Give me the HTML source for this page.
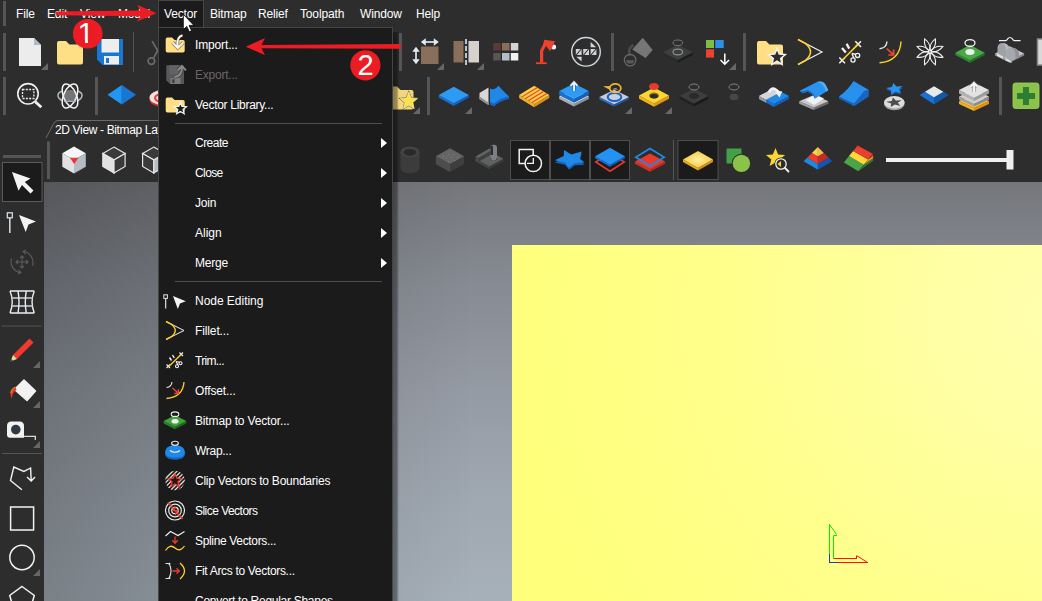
<!DOCTYPE html>
<html>
<head>
<meta charset="utf-8">
<title>Vector Import</title>
<style>
*{box-sizing:border-box;margin:0;padding:0}
html,body{width:1042px;height:601px;overflow:hidden;background:#2d2d2d;font-family:"Liberation Sans",sans-serif;font-size:12px;color:#fff}
#app{position:absolute;left:0;top:0;width:1042px;height:601px;overflow:hidden;background:#2d2d2d}
.abs{position:absolute}
.mb{position:absolute;top:0;height:28px;line-height:28px;font-size:12px;color:#fff;white-space:nowrap;letter-spacing:-0.15px}
.grip{position:absolute;background:#555}
#viewport{position:absolute;left:44px;top:182px;width:998px;height:419px;background:linear-gradient(to right,rgba(0,0,0,0.27) 0px,rgba(0,0,0,0) 430px),linear-gradient(to bottom,#75777c 0%,#878b93 25%,#959ba4 50%,#9fa7b0 75%,#a7b1ba 100%)}
#yellow{position:absolute;left:512px;top:245px;width:530px;height:356px;background:radial-gradient(circle 600px at 545px 72px,#ffffae 0%,#ffffa6 18%,#ffff98 36%,#ffff8c 55%,#ffff82 75%,#ffff7b 95%)}
#menu{position:absolute;left:158px;top:27px;width:235px;height:580px;background:#1b1b1b;border:1px solid #454545}
.mi{position:absolute;left:36px;height:30px;line-height:30px;font-size:12px;color:#fff;white-space:nowrap;letter-spacing:-0.2px}
.mi.dis{color:#6d6565}
.sep{position:absolute;left:16px;width:207px;height:1px;background:#4e4e4e}
.arr{position:absolute;left:221.500px;width:0;height:0;border-left:6px solid #fff;border-top:5px solid transparent;border-bottom:5px solid transparent}
svg{position:absolute;overflow:hidden}
.num{position:absolute;color:#fff;font-family:"Liberation Sans",sans-serif;font-size:29px;line-height:30px;width:30px;text-align:center}
#tab{position:absolute;left:55px;top:121px;height:18px;line-height:18px;font-size:12px;color:#fff;white-space:nowrap;letter-spacing:-0.350px}
</style>
</head>
<body>
<div id="app">
<div id="menubar">
<div class="grip" style="left:3px;top:1px;width:3px;height:25px"></div>
<div class="mb" style="left:16px">File</div>
<div class="mb" style="left:47px">Edit</div>
<div class="mb" style="left:80px">View</div>
<div class="mb" style="left:118px">Model</div>
<div class="abs" style="left:158px;top:0;width:46px;height:28px;background:#1b1b1b;border:1px solid #454545;border-bottom:none"></div>
<div class="mb" style="left:164px">Vector</div>
<div class="mb" style="left:210px">Bitmap</div>
<div class="mb" style="left:258px">Relief</div>
<div class="mb" style="left:300px">Toolpath</div>
<div class="mb" style="left:360px">Window</div>
<div class="mb" style="left:416px">Help</div>
</div>
<div id="viewport"></div>
<div id="yellow"></div>
<svg width="60" height="60" style="left:820px;top:515px" shape-rendering="crispEdges"><g fill="none" stroke-width="1"><path d="M9.500,39 V9.500 M9.500,9.500 L16.500,19.500 M17,20.500 H13.500 M13.500,20.500 V43.500" stroke="#00f000" shape-rendering="auto"/><path d="M9.500,9 V39" stroke="#00f000"/><path d="M13.500,20.500 V43.500" stroke="#00f000"/><path d="M9.500,39 V47.500 H18" stroke="#1e3cb4"/><path d="M18,47.500 H47.500 M13.500,43.500 H36.500 V40.500" stroke="#ff1010"/><path d="M36.500,40.500 L47.500,47.500" stroke="#ff1010" shape-rendering="auto"/></g></svg>
<svg width="1042" height="601" style="left:0;top:0">
<rect x="3" y="33" width="3" height="38" fill="#555"/>
<path d="M19,38 H34 L41,45 V66 H19 Z" fill="#ececec"/><path d="M34,38 L41,45 H34 Z" fill="#a9bccb"/>
<polygon points="48.0,63.0 48.0,70.0 41.0,70.0" fill="#666" />
<path d="M57,43 q0,-2 2,-2 h7 l3.5,3.5 h11.5 q2,0 2,2 v16 q0,2 -2,2 h-22 q-2,0 -2,-2 Z" fill="#ffdf85"/>
<path d="M97,39 H123 V65 H102.5 L97,59.5 Z" fill="#1976d2"/><rect x="101.5" y="39" width="17.5" height="13.5" fill="#eeeeee"/><rect x="104" y="56" width="15" height="8.5" fill="#eeeeee"/><rect x="106" y="58" width="3" height="5" fill="#1976d2"/>
<rect x="133" y="32" width="1" height="40" fill="#555"/>
<g stroke="#6a6a6a" stroke-width="1.7" fill="none"><circle cx="151.4" cy="61.1" r="3.3"/><path d="M153.3,58.3 L162,43 M152.1,41.1 L163,60"/></g>
<rect x="399" y="33" width="3" height="38" fill="#555"/>
<rect x="421" y="46.5" width="17.5" height="17.5" fill="#8a6e58"/>
<rect x="424" y="41" width="11.500" height="2" fill="#bccbd8"/><path d="M420.800,42 L425.800,38.300 V45.700 Z M438.800,42 L433.800,38.300 V45.700 Z" fill="#e4eaee"/>
<rect x="415" y="50" width="2" height="11" fill="#bccbd8"/><path d="M416,46.800 L412.300,51.800 H419.700 Z M416,64.200 L412.300,59.200 H419.700 Z" fill="#e4eaee"/>
<rect x="424" y="50" width="1" height="1" fill="#6f7f92"/>
<rect x="428" y="53" width="1" height="1" fill="#6f7f92"/>
<rect x="432" y="50" width="1" height="1" fill="#6f7f92"/>
<rect x="435" y="54" width="1" height="1" fill="#6f7f92"/>
<rect x="425" y="57" width="1" height="1" fill="#6f7f92"/>
<rect x="430" y="59" width="1" height="1" fill="#6f7f92"/>
<rect x="434" y="60" width="1" height="1" fill="#6f7f92"/>
<rect x="427" y="61.5" width="1" height="1" fill="#6f7f92"/>
<polygon points="444.0,63.0 444.0,70.0 437.0,70.0" fill="#666" />
<rect x="453.5" y="41" width="10" height="21.5" fill="#8a6e58"/><rect x="468.5" y="41" width="10.5" height="21.5" fill="#d3d0d6"/>
<path d="M466,39 V65" stroke="#b8c4cc" stroke-width="2" stroke-dasharray="5,2" fill="none"/>
<rect x="474" y="44" width="1.200" height="1.200" fill="#fbd84a"/>
<rect x="473" y="47" width="1.200" height="1.200" fill="#fbd84a"/>
<rect x="476" y="48.5" width="1.200" height="1.200" fill="#fbd84a"/>
<rect x="472.5" y="52" width="1.200" height="1.200" fill="#fbd84a"/>
<rect x="476" y="54" width="1.200" height="1.200" fill="#fbd84a"/>
<rect x="473.5" y="56.5" width="1.200" height="1.200" fill="#fbd84a"/>
<rect x="472" y="59.5" width="1.200" height="1.200" fill="#fbd84a"/>
<rect x="475" y="60.5" width="1.200" height="1.200" fill="#fbd84a"/>
<rect x="456" y="47" width="1" height="1" fill="#6f7f92"/>
<rect x="459" y="45" width="1" height="1" fill="#6f7f92"/>
<rect x="459" y="49" width="1" height="1" fill="#6f7f92"/>
<rect x="457" y="52" width="1" height="1" fill="#6f7f92"/>
<rect x="460" y="55" width="1" height="1" fill="#6f7f92"/>
<rect x="457" y="58" width="1" height="1" fill="#6f7f92"/>
<rect x="459.5" y="60" width="1" height="1" fill="#6f7f92"/>
<polygon points="484.0,63.0 484.0,70.0 477.0,70.0" fill="#666" />
<rect x="493.2" y="43" width="7.5" height="7.5" fill="#5a3b37"/>
<rect x="502" y="43" width="7.5" height="7.5" fill="#8a6e58"/>
<rect x="510.8" y="43" width="7.5" height="7.5" fill="#d6d2d6"/>
<rect x="493.2" y="53" width="7.5" height="7.5" fill="#565656"/>
<rect x="502" y="53" width="7.5" height="7.5" fill="#b4bec8"/>
<rect x="510.8" y="53" width="7.5" height="7.5" fill="#f1f1f1"/>
<circle cx="553.6" cy="47" r="2.5" fill="#f4f4f4"/><g fill="#f0412f"><rect x="536" y="62.3" width="10.8" height="1.8"/><path d="M540,62.5 V50.5 L544.2,42.5 L547,44 L543.2,51.2 V62.5 Z"/><path d="M544.2,39.8 L555,41.3 L550.2,51.3 L546.3,46.2 L543,45.5 Z"/></g>
<circle cx="586" cy="51.8" r="14.3" fill="none" stroke="#cfd8dc" stroke-width="1.4"/>
<rect x="575.8" y="49" width="5.8" height="6" fill="#d2d2d8"/>
<path d="M576.2,55 L581.2,49" stroke="#2d2d2d" stroke-width="1.1"/>
<rect x="583.2" y="49" width="5.8" height="6" fill="#d2d2d8"/>
<path d="M583.6,55 L588.6,49" stroke="#2d2d2d" stroke-width="1.1"/>
<rect x="590.6" y="49" width="5.8" height="6" fill="#d2d2d8"/>
<path d="M591,55 L596,49" stroke="#2d2d2d" stroke-width="1.1"/>
<polygon points="590.6,42.0 596.2,47.2 590.6,47.2" fill="#d2d2d8" />
<polygon points="576.3,56.7 581.6,56.7 581.6,61.5" fill="#d2d2d8" />
<rect x="611" y="33" width="3" height="38" fill="#555"/>
<g><polygon points="642.700,37.700 652.700,50 645.600,58.100 632.300,49.500" fill="#747678"/><path d="M633.400,45.300 Q627.500,47.500 629.700,56" stroke="#4c4c4c" stroke-width="2.600" fill="none"/><circle cx="630.100" cy="60.100" r="5.800" fill="none" stroke="#686868" stroke-width="1.200"/><path d="M625.800,60.300 H634.400 L632.800,63.500 H627.400 Z" fill="#5a5a5a"/></g>
<polygon points="663.0,52.3 677.9,59.9 677.9,62.6 663.0,55.0" fill="#2a2a2a" /><polygon points="677.9,59.9 692.8,52.3 692.8,55.0 677.9,62.6" fill="#1c1c1c" /><polygon points="677.9,44.7 692.8,52.3 677.9,59.9 663.0,52.3" fill="#3d3f3f" />
<ellipse cx="677.800" cy="52" rx="4.800" ry="2.800" fill="none" stroke="#8a8a8a" stroke-width="1.200"/><ellipse cx="677.800" cy="42.800" rx="4.800" ry="2.800" fill="none" stroke="#787878" stroke-width="1"/>
<rect x="706" y="40" width="8" height="8" fill="#7cc043"/><rect x="715.3" y="40" width="8.4" height="8" fill="#2d8fe8"/><rect x="706" y="49.3" width="8" height="8.3" fill="#e8432e"/>
<path d="M724.8,53.5 V64 M720.5,60 L724.8,64.3 L729,60" stroke="#fff" stroke-width="1.5" fill="none"/>
<polygon points="736.0,63.0 736.0,70.0 729.0,70.0" fill="#666" />
<rect x="743" y="33" width="3" height="38" fill="#555"/>
<path d="M757,43 q0,-2 2,-2 h7 l3.5,3.5 h11.5 q2,0 2,2 v16 q0,2 -2,2 h-22 q-2,0 -2,-2 Z" fill="#ffdf85"/>
<polygon points="777.0,48.6 779.3,54.1 785.3,54.6 780.7,58.5 782.1,64.3 777.0,61.2 771.9,64.3 773.3,58.5 768.7,54.6 774.7,54.1" fill="#2d2d2d" stroke="#f2f2f2" stroke-width="1.5" stroke-linejoin="miter"/>
<path d="M798,39.5 L822,52 L798,64.5" fill="none" stroke="#f2f2f2" stroke-width="1.2"/><path d="M798,39.5 L805,43.2 Q816,52 805,60.8 L798,64.5" fill="none" stroke="#fdd02c" stroke-width="1.6"/>
<g fill="none" stroke="#f2f2f2" stroke-width="1.600"><path d="M839.300,57.500 L845,63.200 M839.300,63.200 L845,57.500"/><path d="M855.300,41.300 L861,47 M855.300,47 L861,41.300"/><path d="M842,48 L845.800,52.600 M846.600,43.800 L849.200,48.600" stroke-width="2.300"/><circle cx="853" cy="60" r="2.100" stroke-width="1.300"/><circle cx="857.600" cy="55.400" r="2.100" stroke-width="1.300"/><path d="M851.800,53.400 L853.800,58 M851.800,53.400 L856,54.500" stroke-width="1.300"/></g><path d="M842.200,60.300 L858.200,44.100" stroke="#fdd02c" stroke-width="1.600"/>
<path d="M879.500,62.800 Q900,61 901,41.500" fill="none" stroke="#fdd02c" stroke-width="1.400"/><path d="M879.500,48.800 Q886.500,48 887,41.500" fill="none" stroke="#e8e8e8" stroke-width="1.400"/><path d="M886.800,48.600 L893,54.300 M888.300,55 H893.600 V49.500" fill="none" stroke="#f0452f" stroke-width="1.700"/>
<g transform="translate(930,51.8)" fill="none" stroke="#f2f2f2" stroke-width="1.1"><path d="M0,0 Q7,-4.300 14,0 Q7,4.300 0,0 Z" transform="rotate(22.5)"/><path d="M0,0 Q7,-4.300 14,0 Q7,4.300 0,0 Z" transform="rotate(67.5)"/><path d="M0,0 Q7,-4.300 14,0 Q7,4.300 0,0 Z" transform="rotate(112.5)"/><path d="M0,0 Q7,-4.300 14,0 Q7,4.300 0,0 Z" transform="rotate(157.5)"/><path d="M0,0 Q7,-4.300 14,0 Q7,4.300 0,0 Z" transform="rotate(202.5)"/><path d="M0,0 Q7,-4.300 14,0 Q7,4.300 0,0 Z" transform="rotate(247.5)"/><path d="M0,0 Q7,-4.300 14,0 Q7,4.300 0,0 Z" transform="rotate(292.5)"/><path d="M0,0 Q7,-4.300 14,0 Q7,4.300 0,0 Z" transform="rotate(337.5)"/></g><circle cx="930" cy="51.8" r="1.6" fill="#f2f2f2"/><circle cx="930" cy="51.8" r="0.7" fill="#2d2d2d"/>
<polygon points="955.3,52.7 970.0,60.3 970.0,62.7 955.3,55.1" fill="#2f8a33" /><polygon points="970.0,60.3 984.7,52.7 984.7,55.1 970.0,62.7" fill="#227227" /><polygon points="970.0,45.1 984.7,52.7 970.0,60.3 955.3,52.7" fill="#48aa46" />
<ellipse cx="970" cy="52" rx="4.6" ry="3" fill="#eee"/><ellipse cx="970" cy="43" rx="5" ry="3.4" fill="none" stroke="#f2f2f2" stroke-width="1.3"/>
<polygon points="995.0,53.5 1009.6,60.7 1009.6,62.7 995.0,55.5" fill="#9a9c9e" /><polygon points="1009.6,60.7 1024.2,53.5 1024.2,55.5 1009.6,62.7" fill="#85878a" /><polygon points="1009.6,46.3 1024.2,53.5 1009.6,60.7 995.0,53.5" fill="#c4c6c8" />
<path d="M997.5,53 V47.5 Q998,43 1002.5,43 L1008,45.5 Q1009.5,47 1009.5,50 V55 L1004,57.5 Z" fill="#9fa3a7"/><path d="M1002.5,43 Q1006.5,42.8 1008.5,46 L1009.5,50 V54 L1006,55.5 V50 Q1005.5,45 1002.5,43 Z" fill="#b4b8bc"/>
<path d="M1006,58.5 V52.5 Q1006.5,47.5 1011.5,47.5 L1017.5,50 Q1019,51.5 1019,54.5 V57 L1012,61 Z" fill="#a6aaae"/><path d="M1011.5,47.5 Q1016,47.5 1018,50.5 L1019,54.500 V57 L1015.5,59 V54.5 Q1015,49.5 1011.5,47.5 Z" fill="#8e9296"/>
<polygon points="997.0,53.5 1003.0,56.5 1003.0,58.7 997.0,55.7" fill="#e4e4e4" />
<polygon points="1005.5,58.3 1011.5,61.3 1011.5,63.0 1005.5,60.2" fill="#e4e4e4" />
<path d="M999,40.600 H1005.500 Q1006.800,40.600 1007.500,39 Q1010,36 1012.500,39 Q1013.200,40.600 1014.500,40.600 H1020.600" fill="none" stroke="#f2f2f2" stroke-width="1.200"/>
<rect x="1037.5" y="39" width="6" height="26" fill="#d9d9d9" stroke="#8a8a8a" stroke-width="1.5"/>
<rect x="3" y="77" width="3" height="38" fill="#555"/>
<circle cx="28" cy="93.800" r="10.200" fill="none" stroke="#eef1f3" stroke-width="1.600"/><path d="M35.300,101.800 L41.300,107.300" stroke="#f0f0f0" stroke-width="2.800" stroke-linecap="butt"/><rect x="22.500" y="89.500" width="11.400" height="9" fill="none" stroke="#f0f0f0" stroke-width="1.300" stroke-dasharray="2,1.300"/>
<path d="M62.500,91 Q57.500,92.500 58,96 Q58.500,99 62,100.500 M77.500,91 Q82.500,92.500 82,96 Q81.500,99 78,100.500" fill="none" stroke="#a9bccb" stroke-width="1.500"/><ellipse cx="70" cy="95.600" rx="6.400" ry="5.800" fill="#747577"/><g fill="none" stroke="#f2f2f2" stroke-width="1.500"><ellipse cx="70" cy="96" rx="6.400" ry="12.800" transform="rotate(-24 70 96)"/><ellipse cx="70" cy="96" rx="6.400" ry="12.800" transform="rotate(24 70 96)"/></g><path d="M64,101.300 H76" stroke="#a9bccb" stroke-width="1.200"/>
<rect x="95" y="77" width="3" height="38" fill="#555"/>
<polygon points="107.5,94.7 121.8,85.0 121.8,104.5" fill="#2196f3" />
<polygon points="136.0,94.7 121.8,85.0 121.8,104.5" fill="#1976d2" />
<ellipse cx="163" cy="99.500" rx="13.500" ry="7.500" fill="#d32f2f"/><ellipse cx="163" cy="97.500" rx="13.500" ry="7.500" fill="#f3dede"/><ellipse cx="164" cy="98" rx="9" ry="4.500" fill="none" stroke="#e53935" stroke-width="2"/>
<path d="M388,88.5 q0,-2 2,-2 h7 l3.5,3.5 h11 q2,0 2,2 v15.5 q0,2 -2,2 h-21.5 q-2,0 -2,-2 Z" fill="#f3d67e"/>
<polygon points="408.8,90.6 411.7,97.2 418.9,97.9 413.5,102.7 415.0,109.8 408.8,106.1 402.6,109.8 404.1,102.7 398.7,97.9 405.9,97.2" fill="#3a3320" />
<polygon points="408.8,92.0 411.2,97.9 417.5,98.4 412.7,102.5 414.2,108.6 408.8,105.3 403.4,108.6 404.9,102.5 400.1,98.4 406.4,97.9" fill="#fbe24a" stroke="#fff6b0" stroke-width="0.700"/>
<polygon points="420.0,107.0 420.0,114.0 413.0,114.0" fill="#666" />
<rect x="427" y="77" width="3" height="38" fill="#555"/>
<polygon points="438.8,95.0 453.8,103.3 453.8,105.9 438.8,97.6" fill="#1a6fd0" /><polygon points="453.8,103.3 468.8,95.0 468.8,97.6 453.8,105.9" fill="#1660bd" /><polygon points="453.8,86.7 468.8,95.0 453.8,103.3 438.8,95.0" fill="#2d9af3" />
<polygon points="472.0,107.0 472.0,114.0 465.0,114.0" fill="#666" />
<polygon points="479.5,93.0 488.5,87.5 488.5,105.0 479.5,99.0" fill="#d8d8d8" />
<polygon points="479.5,99.0 488.5,105.0 488.5,102.5 479.5,96.5" fill="#8f8f8f" />
<path d="M490,88.500 L493,89.600 Q496.500,88.500 498.500,85.700 Q503.500,91.500 509,96.600 V98.800 Q500,100.500 494,106.300 L490,104.200 Z" fill="#2089e8"/><path d="M509,96.600 V98.800 Q500,100.500 494,106.300 V103.800 Q500,98.200 509,96.600 Z" fill="#1560c0"/><path d="M490,101.800 L494,103.800 V106.300 L490,104.200 Z" fill="#1560c0"/>
<polygon points="519.1,94.9 534.2,104.1 534.2,107.3 519.1,98.1" fill="#f2ae2a" /><polygon points="534.2,104.1 549.3,94.9 549.3,98.1 534.2,107.3" fill="#e08f1c" /><polygon points="534.2,85.7 549.3,94.9 534.2,104.1 519.1,94.9" fill="#f8cf45" />
<polygon points="521.5,96.4 536.6,87.2 537.7,87.9 522.6,97.1" fill="#e8452c" />
<polygon points="524.8,98.3 539.9,89.2 541.0,89.8 525.9,99.0" fill="#e8452c" />
<polygon points="528.0,100.3 543.1,91.1 544.2,91.8 529.1,101.0" fill="#e8452c" />
<polygon points="531.3,102.3 546.4,93.1 547.5,93.8 532.4,103.0" fill="#e8452c" />
<polygon points="559.2,96.3 574.0,103.8 574.0,106.6 559.2,99.1" fill="#a8acb0" /><polygon points="574.0,103.8 588.8,96.3 588.8,99.1 574.0,106.6" fill="#8e9296" /><polygon points="574.0,88.8 588.8,96.3 574.0,103.8 559.2,96.3" fill="#e8e8e8" />
<polygon points="559.2,91.0 574.0,98.5 574.0,102.8 559.2,95.3" fill="#1a6fd0" /><polygon points="574.0,98.5 588.8,91.0 588.8,95.3 574.0,102.8" fill="#1660bd" /><polygon points="574.0,83.5 588.8,91.0 574.0,98.5 559.2,91.0" fill="#2d9af3" />
<path d="M574,82.500 V91 M570.500,85.800 L574,82.200 L577.500,85.800" stroke="#1a4f94" stroke-width="3.400" fill="none" opacity="0.600"/><path d="M574,82.500 V91 M570.500,85.800 L574,82.200 L577.500,85.800" stroke="#f2f2f2" stroke-width="1.900" fill="none"/>
<polygon points="599.4,97.0 614.2,104.3 614.2,106.6 599.4,99.3" fill="#2a6fd0" /><polygon points="614.2,104.3 629.0,97.0 629.0,99.3 614.2,106.6" fill="#1a56b0" /><polygon points="614.2,89.7 629.0,97.0 614.2,104.3 599.4,97.0" fill="#c8ccd4" />
<ellipse cx="614.500" cy="97" rx="6.800" ry="4.100" fill="#c6d2e2" stroke="#1e62c8" stroke-width="2"/>
<ellipse cx="615.300" cy="88.200" rx="5.600" ry="4.300" fill="none" stroke="#f0b62c" stroke-width="1.700"/><path d="M603,86.200 L610.500,86 L609.800,89.800 Z" fill="#f0b62c"/><path d="M612.500,89.500 q2.500,-2.500 5.500,0 Z" fill="#b8bcc4"/>
<polygon points="632.0,107.0 632.0,114.0 625.0,114.0" fill="#666" />
<polygon points="639.0,95.5 654.0,103.5 654.0,106.8 639.0,98.8" fill="#f2b020" /><polygon points="654.0,103.5 669.0,95.5 669.0,98.8 654.0,106.8" fill="#e3951a" /><polygon points="654.0,87.5 669.0,95.5 654.0,103.5 639.0,95.5" fill="#fbd734" />
<ellipse cx="654" cy="95.5" rx="5" ry="3" fill="#9a6a18"/><ellipse cx="654" cy="96.3" rx="4" ry="2.2" fill="#2d2d2d"/>
<ellipse cx="654" cy="86.5" rx="5" ry="3.6" fill="#e8392b"/>
<polygon points="672.0,107.0 672.0,114.0 665.0,114.0" fill="#666" />
<polygon points="679.7,96.0 694.0,103.6 694.0,106.6 679.7,99.0" fill="#222" /><polygon points="694.0,103.6 708.3,96.0 708.3,99.0 694.0,106.6" fill="#1a1a1a" /><polygon points="694.0,88.4 708.3,96.0 694.0,103.6 679.7,96.0" fill="#3d3d3d" />
<ellipse cx="694" cy="96" rx="5" ry="3" fill="#2a2a2a"/><ellipse cx="694" cy="87" rx="5" ry="3" fill="none" stroke="#808080" stroke-width="1"/>
<ellipse cx="734" cy="87" rx="5" ry="3" fill="none" stroke="#808080" stroke-width="1"/><ellipse cx="734" cy="97" rx="4.5" ry="3.3" fill="#474747"/>
<polygon points="759.0,96.0 774.0,104.0 774.0,107.0 759.0,99.0" fill="#1a6fd0" /><polygon points="774.0,104.0 789.0,96.0 789.0,99.0 774.0,107.0" fill="#1660bd" /><polygon points="774.0,88.0 789.0,96.0 774.0,104.0 759.0,96.0" fill="#2089e8" />
<polygon points="759.0,96.0 774.0,88.0 781.0,91.7 766.0,99.7" fill="#d5d5d5" />
<polygon points="759.0,96.0 766.0,99.7 766.0,102.7 759.0,99.0" fill="#9a9a9a" />
<path d="M768.800,92.300 Q772.500,84.500 778.800,92.500" fill="none" stroke="#f2f2f2" stroke-width="2.400"/><path d="M775,92 L782.300,91.300 L779.600,97.600 Z" fill="#f2f2f2"/>
<polygon points="799.2,101.3 813.8,107.5 813.8,109.9 799.2,103.7" fill="#9a9c9e" /><polygon points="813.8,107.5 828.4,101.3 828.4,103.7 813.8,109.9" fill="#6e7072" /><polygon points="813.8,95.1 828.4,101.3 813.8,107.5 799.2,101.3" fill="#c6c8ca" />
<polygon points="805.5,100.0 815.5,94.5 824.0,98.5 814.0,105.0" fill="#f2f2f2" />
<path d="M799.800,90.800 L817.500,81.800 Q823.500,80.300 826,85.500 L828.300,90.300 L815,98.700 Q812.500,93 807.700,91.800 L802.500,93.300 Z" fill="#2a93f0"/><path d="M799.800,90.800 L802.500,93.300 L807.700,91.800 Q812.500,93 815,98.700 L815,96.500 Q812.500,91.500 807.700,90 L802,91.500 Z" fill="#1769c8"/><path d="M817.500,81.800 Q823.500,80.300 826,85.500 L828.300,90.300 L826,91.700 Q824,84 817.500,81.800 Z" fill="#55acf5"/>
<path d="M839,96.600 Q848,90 853.600,81 L868.400,89.700 L868.400,96.600 L854,105.900 Z" fill="#2a90ee"/><path d="M839,96.600 L854,103.600 V105.900 L839,98.600 Z" fill="#1565c0"/><path d="M854,103.600 Q859,98 861.500,94 Q864,90.300 868.400,89.700 V96.600 L854,105.900 Z" fill="#1765c4"/>
<ellipse cx="894.300" cy="104" rx="10.300" ry="6.200" fill="#a2a2a2"/><ellipse cx="894.300" cy="102.300" rx="10.300" ry="6.200" fill="#dcdcdc"/>
<polygon points="892.9,97.6 895.8,100.6 901.6,100.2 897.8,102.8 900.3,106.0 894.9,104.6 890.7,107.0 891.2,103.5 886.1,101.8 891.8,101.0" fill="#4c4c4c" />
<polygon points="893.2,84.7 896.5,88.2 902.7,87.7 898.7,90.7 901.3,94.4 895.5,92.9 890.9,95.6 891.4,91.6 885.9,89.6 892.0,88.7" fill="#1769c8" />
<polygon points="893.2,83.1 896.5,86.6 902.7,86.1 898.7,89.1 901.3,92.8 895.5,91.3 890.9,94.0 891.4,90.0 885.9,88.0 892.0,87.1" fill="#2a93f0" />
<polygon points="920.0,95.0 934.0,86.8 948.3,95.0 934.0,104.2" fill="#1565c0" />
<polygon points="920.0,95.0 925.0,91.8 934.0,97.3 934.0,104.2" fill="#1a6fd0" />
<polygon points="948.3,95.0 943.3,91.8 934.0,97.3 934.0,104.2" fill="#1258a8" />
<polygon points="925.0,91.8 934.0,86.3 943.3,91.8 934.0,97.3" fill="#e8e8e8" />
<polygon points="959.0,101.0 974.0,108.0 974.0,111.0 959.0,104.0" fill="#f2ae25" /><polygon points="974.0,108.0 989.0,101.0 989.0,104.0 974.0,111.0" fill="#e3901a" /><polygon points="974.0,94.0 989.0,101.0 974.0,108.0 959.0,101.0" fill="#f6c33c" />
<polygon points="959.0,96.5 974.0,103.5 974.0,106.5 959.0,99.5" fill="#a2a2a2" /><polygon points="974.0,103.5 989.0,96.5 989.0,99.5 974.0,106.5" fill="#8c8c8c" /><polygon points="974.0,89.5 989.0,96.5 974.0,103.5 959.0,96.5" fill="#cfcfcf" />
<polygon points="959.0,90.0 974.0,97.5 974.0,101.0 959.0,93.5" fill="#b2b2b2" /><polygon points="974.0,97.5 989.0,90.0 989.0,93.5 974.0,101.0" fill="#9c9c9c" /><polygon points="974.0,82.5 989.0,90.0 974.0,97.5 959.0,90.0" fill="#e2e2e2" />
<path d="M974,83.500 V92 M970.300,87 L974,83 L977.700,87" stroke="#7a8086" stroke-width="3.400" fill="none" opacity="0.700"/><path d="M974,83.500 V92 M970.300,87 L974,83 L977.700,87" stroke="#f4f6f8" stroke-width="1.900" fill="none"/>
<rect x="999" y="77" width="3" height="38" fill="#555"/>
<rect x="1013" y="83" width="26" height="25.5" rx="2.5" fill="#8bc34a" stroke="#9ed45e" stroke-width="0.8"/><path d="M1023,87 h6 v6 h6 v6 h-6 v6 h-6 v-6 h-6 v-6 h6 Z" fill="#2e7d32"/>
<path d="M46,138 L54,123 Q55.5,120.5 58,120.5 H170" fill="none" stroke="#6a6a6a" stroke-width="1"/>
<rect x="47" y="141.5" width="3" height="37.5" fill="#555"/>
<polygon points="74.0,146.5 85.8,153.2 74.0,159.9 62.3,153.2" fill="#f6f6f6" /><polygon points="62.3,153.2 74.0,159.9 74.0,173.5 62.3,166.8" fill="#e2e2e2" /><polygon points="74.0,159.9 85.8,153.2 85.8,166.8 74.0,173.5" fill="#b4bcc4" /><polygon points="69.8,157.7 78.5,157.7 74.2,164.0" fill="#e53935" />
<polygon points="114.0,147.1 125.1,153.5 114.0,159.9 102.8,153.5" fill="#3a3a3a" stroke="#e6e6e6" stroke-width="1.2"/><polygon points="102.8,153.5 114.0,159.9 114.0,172.9 102.8,166.5" fill="#e2e2e2" stroke="#e6e6e6" stroke-width="1.2"/><polygon points="114.0,159.9 125.1,153.5 125.1,166.5 114.0,172.9" fill="#3a3a3a" stroke="#e6e6e6" stroke-width="1.2"/>
<polygon points="153.8,147.1 164.9,153.5 153.8,159.9 142.6,153.5" fill="#3a3a3a" stroke="#e6e6e6" stroke-width="1.2"/><polygon points="142.6,153.5 153.8,159.9 153.8,172.9 142.6,166.5" fill="#3a3a3a" stroke="#e6e6e6" stroke-width="1.2"/><polygon points="153.8,159.9 164.9,153.5 164.9,166.5 153.8,172.9" fill="#b4bcc4" stroke="#e6e6e6" stroke-width="1.2"/>
<path d="M400.500,152 v16 a9.500,5.500 0 0 0 19,0 v-16 Z" fill="#3c3c3c"/><ellipse cx="410" cy="152" rx="9.500" ry="5.500" fill="#444"/><ellipse cx="410" cy="152.300" rx="6.200" ry="3.400" fill="#2a2a2a"/>
<polygon points="435.9,156.2 450.0,164.1 450.0,172.1 435.9,164.2" fill="#4c4e4e" /><polygon points="450.0,164.1 464.1,156.2 464.1,164.2 450.0,172.1" fill="#3d3f3f" /><polygon points="450.0,148.3 464.1,156.2 450.0,164.1 435.9,156.2" fill="#636567" />
<rect x="443" y="156" width="1" height="1" fill="#b07a3a"/>
<rect x="448" y="154" width="1" height="1" fill="#b07a3a"/>
<rect x="453" y="154" width="1" height="1" fill="#b07a3a"/>
<rect x="446" y="158" width="1" height="1" fill="#b07a3a"/>
<rect x="451" y="157" width="1" height="1" fill="#b07a3a"/>
<rect x="457" y="157" width="1" height="1" fill="#b07a3a"/>
<rect x="448" y="161" width="1" height="1" fill="#b07a3a"/>
<rect x="454" y="160" width="1" height="1" fill="#b07a3a"/>
<polygon points="475.6,158.8 489.5,166.6 489.5,169.2 475.6,161.4" fill="#444646" /><polygon points="489.5,166.6 503.4,158.8 503.4,161.4 489.5,169.2" fill="#383a3a" /><polygon points="489.5,151.0 503.4,158.8 489.5,166.6 475.6,158.8" fill="#5e6062" />
<polygon points="475.6,156.4 489.5,148.4 492.0,149.9 478.2,157.9" fill="#626466" />
<polygon points="478.2,157.9 492.0,149.9 492.0,154.0 478.2,162.0" fill="#3e4040" />
<polygon points="475.6,156.4 478.2,157.9 478.2,162.0 475.6,160.5" fill="#4a4c4c" />
<rect x="490.600" y="144.800" width="6.400" height="17" rx="3" fill="#7c8084"/><rect x="490.600" y="146" width="2.400" height="9" fill="#2d2d2d"/><path d="M490.600,158 a3.200,3.200 0 0 0 6.400,0" fill="none" stroke="#4a4c4c" stroke-width="1"/>
<rect x="510.5" y="140.500" width="39" height="39" fill="#1b1b1b" stroke="#4e4e4e" stroke-width="1"/>
<rect x="550.5" y="140.500" width="39" height="39" fill="#1b1b1b" stroke="#4e4e4e" stroke-width="1"/>
<rect x="590.5" y="140.500" width="39" height="39" fill="#1b1b1b" stroke="#4e4e4e" stroke-width="1"/>
<rect x="678" y="140.500" width="40" height="39" fill="#1b1b1b" stroke="#4e4e4e" stroke-width="1"/>
<rect x="519.2" y="149.5" width="14" height="14" fill="none" stroke="#f2f2f2" stroke-width="1.5"/><circle cx="533.3" cy="163.4" r="8.2" fill="#1b1b1b" stroke="#f2f2f2" stroke-width="1.5"/><path d="M533.3,158 V163.4 H527" fill="none" stroke="#f2f2f2" stroke-width="1.3"/>
<polygon points="564.0,152.3 571.3,156.6 581.7,153.7 579.7,160.6 584.6,164.7 574.8,165.2 569.0,169.8 565.0,164.7 554.8,162.4 563.8,158.3" fill="#1565c0" />
<polygon points="564.0,150.1 571.3,154.4 581.7,151.5 579.7,158.4 584.6,162.5 574.8,163.0 569.0,167.6 565.0,162.5 554.8,160.2 563.8,156.1" fill="#2089e8" />
<polygon points="595.8,162.0 610.0,153.0 624.3,162.0 610.0,171.2" fill="none" stroke="#e8392b" stroke-width="1.600"/>
<polygon points="595.1,156.3 610.0,164.8 610.0,166.7 595.1,158.2" fill="#1a6fd0" /><polygon points="610.0,164.8 624.9,156.3 624.9,158.2 610.0,166.7" fill="#1660bd" /><polygon points="610.0,147.8 624.9,156.3 610.0,164.8 595.1,156.3" fill="#2492f0" />
<polygon points="635.0,161.5 650.0,169.5 650.0,171.8 635.0,163.8" fill="#d8311f" /><polygon points="650.0,169.5 665.0,161.5 665.0,163.8 650.0,171.8" fill="#c0281a" /><polygon points="650.0,153.5 665.0,161.5 650.0,169.5 635.0,161.5" fill="#e8392b" />
<polygon points="635.8,157.3 650.0,148.6 664.2,157.3 650.0,166.0" fill="none" stroke="#2089e8" stroke-width="1.700"/>
<rect x="673" y="140" width="1" height="40" fill="#555"/>
<defs><radialGradient id="gold" cx="50%" cy="50%" r="55%"><stop offset="0" stop-color="#fff0a0"/><stop offset="1" stop-color="#f7c83a"/></radialGradient></defs>
<polygon points="683.0,159.5 698.0,168.1 698.0,170.5 683.0,161.9" fill="#e9a825" /><polygon points="698.0,168.1 713.0,159.5 713.0,161.9 698.0,170.5" fill="#d98e1c" /><polygon points="698.0,150.9 713.0,159.5 698.0,168.1 683.0,159.5" fill="url(#gold)" />
<rect x="726.5" y="148.5" width="15" height="15" fill="#43a047"/><circle cx="741.4" cy="163.4" r="9.6" fill="#2d2d2d"/><circle cx="741.4" cy="163.4" r="8.7" fill="#8bc34a"/>
<polygon points="775.5,148.0 778.1,154.4 785.0,154.9 779.7,159.4 781.4,166.1 775.5,162.4 769.6,166.1 771.3,159.4 766.0,154.9 772.9,154.4" fill="#fbd734" />
<circle cx="781" cy="164" r="6.6" fill="#2d2d2d"/><circle cx="781" cy="164" r="5.2" fill="#2d2d2d" stroke="#f2f2f2" stroke-width="1.3"/><path d="M781,161 v6 l-3.5,-3 Z" fill="#fbd734"/><path d="M785,168 L788.5,171.5" stroke="#f2f2f2" stroke-width="1.8" stroke-linecap="round"/>
<polygon points="817.9,147.1 817.9,147.1 817.9,156.6 811.9,153.0" fill="#fbd54a" />
<polygon points="817.9,147.1 817.9,147.1 817.9,156.6 823.9,153.0" fill="#eebc50" />
<polygon points="811.9,153.0 817.9,156.6 817.9,164.1 807.2,157.7" fill="#ea3f2c" />
<polygon points="823.9,153.0 817.9,156.6 817.9,164.1 828.7,157.7" fill="#c42b21" />
<polygon points="807.2,157.7 817.9,164.1 817.9,169.8 803.6,161.2" fill="#1e88e5" />
<polygon points="828.7,157.7 817.9,164.1 817.9,169.8 832.3,161.2" fill="#1553b5" />
<polygon points="843.8,162.5 858.3,171.3 863.8,164.7 849.0,156.1" fill="#4aa548" />
<polygon points="849.0,156.1 863.8,164.7 868.1,159.4 853.2,151.0" fill="#fbd83c" />
<polygon points="853.2,151.0 868.1,159.4 872.7,153.8 857.6,145.6" fill="#ea3f2c" />
<polygon points="858.3,171.3 863.8,164.7 873.2,157.9 873.2,160.7" fill="#2e7d32" />
<polygon points="863.8,164.7 868.1,159.4 873.2,155.8 873.2,157.9" fill="#f09a28" />
<polygon points="868.1,159.4 872.7,153.8 873.2,155.8" fill="#c42b21" />
<rect x="886" y="158" width="121" height="4" fill="#f0f0f0"/><rect x="1006.5" y="150" width="7" height="19.5" fill="#f0f0f0"/>
<rect x="3" y="155" width="38" height="3" fill="#555"/>
<rect x="2.5" y="162.5" width="39.5" height="39" fill="#1b1b1b" stroke="#5a5a5a" stroke-width="1"/>
<path d="M12,172 L30.5,178.5 L24.8,182 L33.5,190.5 L30.5,193.5 L22,185 L18.5,190.8 Z" fill="#f4f4f4"/>
<rect x="9" y="217" width="1.6" height="16" fill="#c8d4dc"/><rect x="7.3" y="212.8" width="5" height="5" fill="#2d2d2d" stroke="#e0e6ea" stroke-width="1.2"/>
<path d="M19,215 L36,221.5 L28.5,224.5 L25.7,232 Z" fill="#f4f4f4"/>
<g fill="none" stroke="#5c5c5c" stroke-width="1.1"><path d="M22,256 V268 M16,262 H28 M20,258 L22,256 L24,258 M20,266 L22,268 L24,266 M18,260 L16,262 L18,264 M26,260 L28,262 L26,264"/><path d="M24,251.5 a11,11 0 0 1 8.5,14 M20,272.5 a11,11 0 0 1 -8.5,-14"/><path d="M26,250 L23,251.5 L25.5,254 M18,274 L21,272.5 L18.5,270"/></g>
<g fill="none" stroke="#ececec" stroke-width="1.400"><path d="M10,291 H34.300 M10,313 H34.300 M10,291 Q14.500,302 10,313 M34.300,291 Q29.800,302 34.300,313"/><path d="M11.500,298 H32.800 M11.500,306 H32.800" stroke="#c8d4dc"/><path d="M18,291 Q20,302 18,313 M26.300,291 Q24.300,302 26.300,313"/></g>
<rect x="2" y="325.5" width="40" height="1" fill="#555"/>
<path d="M29.5,338.5 L33.5,342.5 L17,359 L13,355 Z" fill="#f03a2e"/><path d="M13,355 L17,359 L10.5,361.5 Z" fill="#f0d9a0"/><path d="M10.5,361.5 l1,-2.6 l1.6,1.6 Z" fill="#444"/>
<polygon points="40.0,361.0 40.0,368.0 33.0,368.0" fill="#666" />
<path d="M24,380 L35.5,391 L27,400.5 L14.5,389.5 Z" fill="#f2f2f2" stroke="#f2f2f2" stroke-width="1.5" stroke-linejoin="round"/><path d="M15.5,387 q-7,2 -4,12 q1,-7 5,-9 Z" fill="#e8392b"/><path d="M15.5,387 q-4,2 -4.8,6" stroke="#f0802b" stroke-width="1.2" fill="none"/>
<polygon points="40.0,401.0 40.0,408.0 33.0,408.0" fill="#666" />
<path d="M7,426 q0,-4.5 4.5,-4.5 h8 q4.5,0 4.5,4.5 v11.8 h-14 q-3,0 -3,-3 Z" fill="#f2f2f2"/><circle cx="15.8" cy="429.6" r="4.8" fill="#2f3a44"/><path d="M24,436.3 H35.3 V440" fill="none" stroke="#d4dde3" stroke-width="1.3"/>
<polygon points="40.0,441.0 40.0,448.0 33.0,448.0" fill="#666" />
<rect x="2" y="453" width="40" height="1" fill="#555"/>
<path d="M21.9,489.7 L10.5,480.6 L13.8,467 L23.9,471.4 L30.6,468 L31.2,480.6 M27,477 L31.2,481 L35,477" fill="none" stroke="#f2f2f2" stroke-width="1.4"/>
<rect x="10.6" y="507" width="23" height="23" fill="none" stroke="#f2f2f2" stroke-width="1.5"/>
<circle cx="22" cy="557.5" r="12.2" fill="none" stroke="#f2f2f2" stroke-width="1.5"/>
<polygon points="40.0,569.0 40.0,576.0 33.0,576.0" fill="#666" />
<path d="M22,586.5 L34.3,595.5 L30,610 H14 L9.7,595.5 Z" fill="none" stroke="#f2f2f2" stroke-width="1.5"/>
</svg>
<div id="tab">2D View - Bitmap Layer</div>
<div class="abs" style="left:393px;top:32px;width:6px;height:569px;background:linear-gradient(to right,rgba(0,0,0,0.42) 0,rgba(0,0,0,0.36) 60%,rgba(0,0,0,0.14) 85%,rgba(0,0,0,0) 100%)"></div>
<div id="menu">
<div class="mi" style="top:2px;letter-spacing:-0.14px">Import...</div>
<div class="mi dis" style="top:32px;letter-spacing:-0.23px">Export...</div>
<div class="mi" style="top:62px;letter-spacing:-0.29px">Vector Library...</div>
<div class="mi" style="top:100px;letter-spacing:-0.53px">Create</div>
<div class="arr" style="top:109.5px"></div>
<div class="mi" style="top:130px;letter-spacing:-0.60px">Close</div>
<div class="arr" style="top:139.5px"></div>
<div class="mi" style="top:160px;letter-spacing:-0.20px">Join</div>
<div class="arr" style="top:169.5px"></div>
<div class="mi" style="top:190px;letter-spacing:0.00px">Align</div>
<div class="arr" style="top:199.5px"></div>
<div class="mi" style="top:220px;letter-spacing:-0.20px">Merge</div>
<div class="arr" style="top:229.5px"></div>
<div class="mi" style="top:258px;letter-spacing:-0.03px">Node Editing</div>
<div class="mi" style="top:288px;letter-spacing:-0.12px">Fillet...</div>
<div class="mi" style="top:318px;letter-spacing:-0.67px">Trim...</div>
<div class="mi" style="top:348px;letter-spacing:-0.12px">Offset...</div>
<div class="mi" style="top:378px;letter-spacing:-0.15px">Bitmap to Vector...</div>
<div class="mi" style="top:408px;letter-spacing:-0.29px">Wrap...</div>
<div class="mi" style="top:438px;letter-spacing:-0.24px">Clip Vectors to Boundaries</div>
<div class="mi" style="top:468px;letter-spacing:-0.53px">Slice Vectors</div>
<div class="mi" style="top:498px;letter-spacing:-0.34px">Spline Vectors...</div>
<div class="mi" style="top:528px;letter-spacing:-0.32px">Fit Arcs to Vectors...</div>
<div class="mi" style="top:558px;letter-spacing:-0.28px">Convert to Regular Shapes</div>
<div class="sep" style="top:95px"></div>
<div class="sep" style="top:253px"></div>
</div>
<svg width="1042" height="601" style="left:0;top:0">
<path d="M165.700,39.200 q0,-1.700 1.700,-1.700 h4.600 l2.600,2.600 h8.400 q1.700,0 1.700,1.700 v9 q0,1.700 -1.700,1.700 h-15.600 q-1.700,0 -1.700,-1.700 Z" fill="#ffdf85"/>
<path d="M182.500,35.200 Q176.300,37 177.600,46.500 M172.600,42.600 L177.800,48 L183.200,42.600" fill="none" stroke="#3a3420" stroke-width="3.600" opacity="0.550"/>
<path d="M182.500,35.200 Q176.300,37 177.600,46.500 M172.600,42.600 L177.800,48 L183.200,42.600" fill="none" stroke="#f4f4f4" stroke-width="2"/>
<path d="M166.300,65.200 H184 V84 H170 L166.300,80.300 Z" fill="#58585a"/><rect x="170.500" y="78" width="10" height="6" fill="#7a7a7c"/><rect x="172.300" y="79.300" width="2.200" height="3.600" fill="#3a3a3a"/><rect x="169.500" y="65.200" width="11" height="9.500" fill="#626264"/>
<path d="M174.500,77 Q182.500,75.500 181.800,67.500 M177.600,70.300 L181.800,66 L186,70.300" fill="none" stroke="#2a2a2a" stroke-width="3.400" opacity="0.600"/>
<path d="M174.500,77 Q182.500,75.500 181.800,67.500 M177.600,70.300 L181.800,66 L186,70.300" fill="none" stroke="#8c8c8c" stroke-width="1.900"/>
<path d="M165.700,99.200 q0,-1.700 1.700,-1.700 h4.600 l2.600,2.600 h8.400 q1.700,0 1.700,1.700 v9 q0,1.700 -1.700,1.700 h-15.600 q-1.700,0 -1.700,-1.700 Z" fill="#ffdf85"/>
<polygon points="180.4,102.3 182.0,106.3 186.4,106.7 183.1,109.5 184.1,113.7 180.4,111.4 176.7,113.7 177.7,109.5 174.4,106.7 178.8,106.3" fill="#1b1b1b" stroke="#f2f2f2" stroke-width="1.300"/>
<rect x="165" y="298" width="1.3" height="10.5" fill="#c8d4dc"/><rect x="163.8" y="294.8" width="3.6" height="3.6" fill="#1b1b1b" stroke="#e0e6ea" stroke-width="1"/><path d="M173,296 L185.8,301.3 L180,303.4 L177.8,309 Z" fill="#f4f4f4"/>
<path d="M166,321.5 L184,330.5 L166,339.5" fill="none" stroke="#f2f2f2" stroke-width="1"/><path d="M166,321.500 L171,324 Q179.500,330.500 171,337 L166,339.500" fill="none" stroke="#fdd02c" stroke-width="1.400"/>
<g fill="none" stroke="#f2f2f2" stroke-width="1.1"><path d="M166.5,364.5 L170,368 M166.500,368 L170,364.5"/><path d="M179.500,352.5 L183,356 M179.500,356 L183,352.5"/><path d="M169.5,357.5 L171.5,360.5 M172.500,355 L174.300,358" stroke-width="1.4"/><circle cx="177" cy="366.2" r="1.5"/><circle cx="180.500" cy="363.2" r="1.5"/><path d="M176,361.500 L178,365 M176,361.500 L179.800,362.300"/></g><path d="M168.500,366.700 L181.300,354.200" stroke="#fdd02c" stroke-width="1.3"/>
<path d="M166.500,398.500 Q183,397 184,382" fill="none" stroke="#fdd02c" stroke-width="1.3"/><path d="M166.500,387.500 Q171.500,387 172,382" fill="none" stroke="#e8e8e8" stroke-width="1.1"/><path d="M172.500,388 L178,393 M174.300,393.500 H178.400 V389.200" fill="none" stroke="#f0452f" stroke-width="1.4"/>
<polygon points="163.7,421.0 175.0,426.8 175.0,429.2 163.7,423.4" fill="#2c7d2c" /><polygon points="175.0,426.8 186.3,421.0 186.3,423.4 175.0,429.2" fill="#1f6a22" /><polygon points="175.0,415.2 186.3,421.0 175.0,426.8 163.7,421.0" fill="#3fa53b" />
<ellipse cx="175" cy="421.3" rx="3.5" ry="2.3" fill="#eee"/><ellipse cx="175" cy="414.200" rx="3.8" ry="2.3" fill="none" stroke="#f2f2f2" stroke-width="1.1"/>
<path d="M165,452.5 q0,-7 10,-7.500 q10,0.5 10,7.500 q0,7 -10,7 q-10,0 -10,-7 Z" fill="#2089e8"/><path d="M165.300,454 q1,5.500 9.700,5.500 q8.700,0 9.700,-5.500 q-2,3.500 -9.700,3.500 q-7.700,0 -9.700,-3.500 Z" fill="#1565c0"/><ellipse cx="175" cy="443.300" rx="3.400" ry="2" fill="none" stroke="#f2f2f2" stroke-width="1.1"/><path d="M170,450.500 q5,3.500 10,0" fill="none" stroke="#f2f2f2" stroke-width="1.2"/>
<defs><clipPath id="cc"><circle cx="175" cy="480.500" r="9.800"/></clipPath></defs><g clip-path="url(#cc)" stroke="#e0e0e0" stroke-width="1.300"><path d="M152,492 L176,468"/><path d="M156.2,492 L180.2,468"/><path d="M160.4,492 L184.4,468"/><path d="M164.6,492 L188.6,468"/><path d="M168.8,492 L192.8,468"/><path d="M173,492 L197,468"/><path d="M177.2,492 L201.2,468"/><path d="M181.4,492 L205.4,468"/><path d="M185.6,492 L209.6,468"/><path d="M189.8,492 L213.8,468"/><path d="M194,492 L218,468"/><path d="M198.2,492 L222.2,468"/></g>
<polygon points="175.0,474.0 176.9,478.2 181.5,478.7 178.0,481.8 179.0,486.3 175.0,484.0 171.0,486.3 172.0,481.8 168.5,478.7 173.1,478.2" fill="#1b1b1b" stroke="#ef3b2d" stroke-width="1.400"/>
<g fill="none" stroke="#e8e8e8" stroke-width="1.200"><circle cx="175" cy="510.500" r="9.500"/><circle cx="175" cy="510.500" r="6.300"/><circle cx="175" cy="510.500" r="3.200"/></g><path d="M168,502.500 L182.500,519" stroke="#ef3b2d" stroke-width="1.300"/><path d="M175.500,506.500 l-2,4.200 h3.600 l-2,4.500" fill="none" stroke="#ef3b2d" stroke-width="1.300"/>
<path d="M165.500,536 L170.500,531.500 L178,535.500 L184.500,531.500" fill="none" stroke="#f2f2f2" stroke-width="1.100"/><path d="M175,536.500 V543 M172.300,540.300 L175,543.200 L177.700,540.300" fill="none" stroke="#ef3b2d" stroke-width="1.300"/><path d="M165.500,550.500 Q170,543.500 175,548 T184.500,546" fill="none" stroke="#fdd02c" stroke-width="1.300"/>
<path d="M165.500,563.500 H169 Q173,570.500 169,578.500 H165.500" fill="none" stroke="#e0e0e0" stroke-width="1.100"/><circle cx="169.500" cy="563.800" r="1" fill="#e0e0e0"/><circle cx="169.500" cy="578" r="1" fill="#e0e0e0"/><path d="M172.500,571 H179 M176.500,568.300 L179.300,571 L176.500,573.800" fill="none" stroke="#ef3b2d" stroke-width="1.300"/><path d="M180,563 Q189,571 180,579" fill="none" stroke="#fdd02c" stroke-width="1.300"/>
</svg>
<svg width="1042" height="601" style="left:0;top:0">
<path d="M56.800,11.400 Q54.200,13.300 56.800,15.200 L140.500,16.200 L137,21.600 L156.500,13.200 L137,4.700 L140.500,10.500 Z" fill="#ec1c24"/>
<circle cx="87.700" cy="33.700" r="14.800" fill="#ec1c24"/>
<path d="M400,44 Q401.800,46.400 400,48.800 L261.500,48.300 L265,55.200 L245.800,46.700 L265,38 L261.500,45.100 Z" fill="#ec1c24"/>
<circle cx="365.400" cy="65.300" r="15.100" fill="#ec1c24"/>
<path d="M183.300,14.300 V29.600 L186.800,26.400 L189.300,31.800 L191.600,30.800 L189.100,25.400 H193.900 Z" fill="#fff" stroke="#000" stroke-width="0.800" stroke-linejoin="miter"/>
</svg>
<div class="num" style="left:70.800px;top:17.500px;font-size:30px">1</div><div class="abs" style="left:76px;top:39.800px;width:8.700px;height:4.700px;background:#ec1c24"></div><div class="abs" style="left:87.900px;top:39.800px;width:6px;height:4.700px;background:#ec1c24"></div>
<div class="num" style="left:350.500px;top:50px">2</div>
</div>
</body>
</html>
